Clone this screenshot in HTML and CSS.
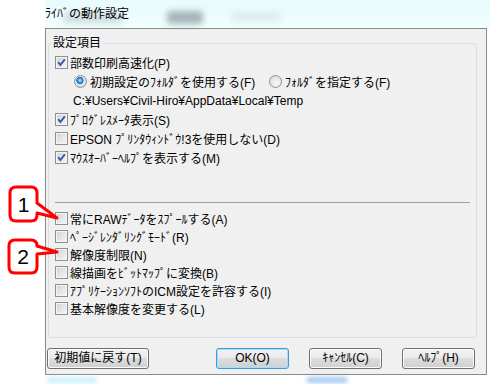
FILE: index.html
```html
<!DOCTYPE html>
<html lang="ja">
<head>
  <meta charset="UTF-8">
  <title>ドライバの動作設定</title>
  <link rel="stylesheet" href="styles.css">
</head>
<body>
  <div class="screen">
    <svg class="callouts" width="70" height="290" viewBox="0 0 70 290">
      <path d="M16 187 H31 Q37 187 37 193 V203 L57 218 L37 213 V215 Q37 221 31 221 H16 Q10 221 10 215 V193 Q10 187 16 187 Z"/>
      <text x="23.5" y="212">1</text>
      <path d="M15 240 H31 Q37 240 37 246 L57 252 L37 254 V267 Q37 273 31 273 H15 Q9 273 9 267 V246 Q9 240 15 240 Z"/>
      <text x="23" y="264">2</text>
    </svg>

    <div class="window">
      <div class="titlebar">
        <span class="glass glass-a"></span>
        <span class="glass glass-b"></span>
        <span class="glass glass-c"></span>
        <span class="title">ﾗｲﾊﾞの動作設定</span>
      </div>

      <div class="dialog">
        <fieldset class="group">
          <legend>設定項目</legend>

          <div class="section">
            <div class="row"><span class="check on"><svg viewBox="0 0 11 11"><path d="M2.2 5.2 L4.4 8 L8.8 2.4"/></svg></span>部数印刷高速化(P)</div>
            <div class="row radios">
              <span class="radio-item first"><span class="radio on"></span>初期設定のﾌｫﾙﾀﾞを使用する(F)</span>
              <span class="radio-item"><span class="radio"></span>ﾌｫﾙﾀﾞを指定する(F)</span>
            </div>
            <div class="row path">C:¥Users¥Civil-Hiro¥AppData¥Local¥Temp</div>
            <div class="row"><span class="check on"><svg viewBox="0 0 11 11"><path d="M2.2 5.2 L4.4 8 L8.8 2.4"/></svg></span>ﾌﾟﾛｸﾞﾚｽﾒｰﾀ表示(S)</div>
            <div class="row"><span class="check"></span>EPSON ﾌﾟﾘﾝﾀｳｨﾝﾄﾞｳ!3を使用しない(D)</div>
            <div class="row"><span class="check on"><svg viewBox="0 0 11 11"><path d="M2.2 5.2 L4.4 8 L8.8 2.4"/></svg></span>ﾏｳｽｵｰﾊﾞｰﾍﾙﾌﾟを表示する(M)</div>
          </div>

          <hr class="sep">

          <div class="section compact">
            <div class="row"><span class="check"></span>常にRAWﾃﾞｰﾀをｽﾌﾟｰﾙする(A)</div>
            <div class="row"><span class="check"></span>ﾍﾟｰｼﾞﾚﾝﾀﾞﾘﾝｸﾞﾓｰﾄﾞ(R)</div>
            <div class="row"><span class="check"></span>解像度制限(N)</div>
            <div class="row"><span class="check"></span>線描画をﾋﾞｯﾄﾏｯﾌﾟに変換(B)</div>
            <div class="row"><span class="check"></span>ｱﾌﾟﾘｹｰｼｮﾝｿﾌﾄのICM設定を許容する(I)</div>
            <div class="row"><span class="check"></span>基本解像度を変更する(L)</div>
          </div>
        </fieldset>

        <div class="buttons">
          <button class="btn wide">初期値に戻す(T)</button>
          <button class="btn default">OK(O)</button>
          <button class="btn">ｷｬﾝｾﾙ(C)</button>
          <button class="btn">ﾍﾙﾌﾟ(H)</button>
        </div>
      </div>

      <div class="below">
        <span class="glow glow-a"></span>
        <span class="glow glow-b"></span>
      </div>
    </div>
  </div>
</body>
</html>
```
FILE: styles.css
```css
body {
  margin: 0;
  background: #fff;
  font-family: "Liberation Sans", "Noto Sans CJK JP", sans-serif;
  font-size: 12px;
  color: #000;
}
.screen {
  position: relative;
  width: 490px;
  height: 384px;
  overflow: hidden;
}

/* callout balloons over the dialog */
.callouts {
  position: absolute;
  left: 0;
  top: 0;
  z-index: 5;
}
.callouts path {
  fill: #fff;
  stroke: #ff0000;
  stroke-width: 3;
  stroke-linejoin: round;
}
.callouts text {
  font-family: "Liberation Sans", Arial, sans-serif;
  font-size: 21px;
  text-anchor: middle;
  fill: #000;
}

.window {
  margin-left: 45px;
  width: 445px;
}
.titlebar {
  position: relative;
  height: 28px;
  background: linear-gradient(#e8fbfd, #f1feff);
}
.title {
  position: relative;
  display: block;
  padding-top: 6px;
  line-height: 16px;
}
.glass {
  position: absolute;
  filter: blur(3px);
  border-radius: 4px;
}
.glass-a {
  left: 18px;
  top: 13px;
  width: 60px;
  height: 10px;
  background: rgba(110, 125, 135, 0.25);
}
.glass-b {
  left: 122px;
  top: 11px;
  width: 36px;
  height: 13px;
  background: rgba(80, 90, 100, 0.45);
}
.glass-c {
  left: 186px;
  top: 12px;
  width: 50px;
  height: 10px;
  background: rgba(150, 170, 180, 0.2);
}

.dialog {
  width: 440px;
  border: 1px solid #8b8b8b;
  background: #f0f0f0;
  padding-bottom: 5px;
}
.group {
  margin: 7px 9px 0 2px;
  padding: 3px 6px 20px 6px;
  border: 1px solid #d5dfe5;
  border-radius: 3px;
  min-width: 0;
}
.group legend {
  margin-left: -4px;
  padding: 0 2px;
  line-height: 14px;
}
.row {
  display: flex;
  align-items: center;
  height: 19px;
  white-space: nowrap;
}
.compact .row {
  height: 18px;
}
.radios {
  padding-left: 19px;
}
.radio-item {
  display: flex;
  align-items: center;
}
.radio-item.first {
  width: 195px;
}
.path {
  padding-left: 18px;
}
.sep {
  margin: 35px 0 6px;
  border: 0;
  border-top: 1px solid #a0a0a0;
  height: 0;
}

.check {
  flex: none;
  width: 13px;
  height: 13px;
  margin-right: 2px;
  box-sizing: border-box;
  border: 1px solid #8e8f8f;
  background: linear-gradient(135deg, #cfd2d7, #f7f7f7);
  box-shadow: inset 0 0 0 1px #f4f4f4;
}
.check svg {
  display: block;
  width: 11px;
  height: 11px;
}
.check path {
  fill: none;
  stroke: #3a56a4;
  stroke-width: 1.9;
}
.radio {
  flex: none;
  width: 13px;
  height: 13px;
  margin-right: 3px;
  box-sizing: border-box;
  border: 1px solid #8e8f8f;
  border-radius: 50%;
  background: radial-gradient(circle at 60% 65%, #f8f8f8, #d2d5da);
}
.radio.on {
  background: radial-gradient(circle at 45% 40%, #c8efff 0, #3aa2ea 22%, #1462b4 38%, #e4e6e9 42%, #cfd2d7 100%);
}

.buttons {
  display: flex;
  gap: 20px;
  margin-top: 10px;
  padding: 0 11px 0 1px;
}
.btn {
  width: 73px;
  height: 21px;
  padding: 0;
  box-sizing: border-box;
  border: 1px solid #707070;
  border-radius: 3px;
  background: linear-gradient(#f2f2f2, #ebebeb 45%, #dddddd 50%, #cfcfcf);
  box-shadow: inset 0 0 0 1px #fbfbfb;
  font: inherit;
  line-height: 17px;
  color: #000;
}
.btn.wide {
  width: 102px;
  margin-right: auto;
}
.btn.default {
  border-color: #3c9ad8;
  box-shadow: inset 0 0 0 1px #9ee2fa;
}

.below {
  position: relative;
  height: 9px;
}
.glow {
  position: absolute;
  top: 2px;
  height: 6px;
  filter: blur(2px);
}
.glow-a {
  left: 2px;
  width: 50px;
  background: rgba(170, 230, 250, 0.6);
}
.glow-b {
  left: 262px;
  width: 40px;
  background: rgba(90, 160, 230, 0.55);
}
```
